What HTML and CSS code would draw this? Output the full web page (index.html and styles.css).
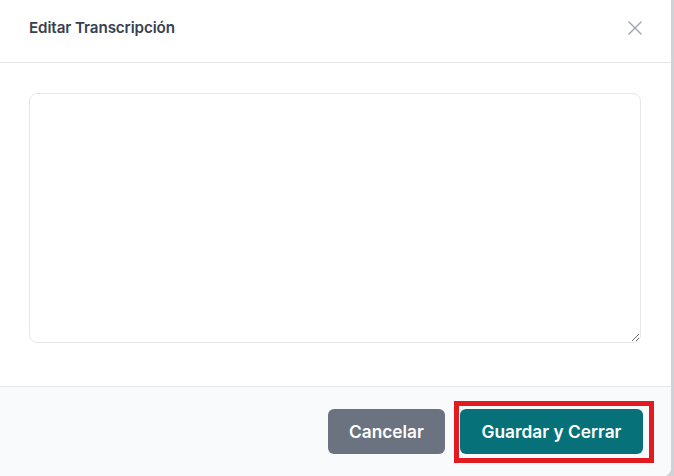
FILE: index.html
```html
<!DOCTYPE html>
<html lang="es">
<head>
<meta charset="utf-8">
<title>Editar Transcripción</title>
<link rel="stylesheet" href="styles.css">
</head>
<body>
<div class="modal">
  <div class="modal-header">
    <h2 class="modal-title">Editar Transcripción</h2>
    <button class="close-btn" aria-label="Cerrar">
      <svg width="14" height="14" viewBox="0 0 14 14" fill="none" stroke="#9ca3af" stroke-width="1.4" stroke-linecap="round"><path d="M1 1L13 13M13 1L1 13"/></svg>
    </button>
  </div>
  <div class="modal-body">
    <textarea class="transcript"></textarea>
  </div>
  <div class="modal-footer">
    <button class="btn btn-cancel">Cancelar</button>
    <button class="btn btn-save">Guardar y Cerrar</button>
  </div>
</div>
<div class="highlight"></div>
</body>
</html>
```
FILE: styles.css
```css
html, body {
  margin: 0;
  padding: 0;
  height: 100%;
}
body {
  background: #cfd2d6;
  overflow: hidden;
  position: relative;
}
.modal {
  width: 671px;
  height: 476px;
  background: #ffffff;
  border-bottom-right-radius: 8px;
  display: flex;
  flex-direction: column;
  overflow: hidden;
}
.modal-header {
  border-bottom: 1px solid #e5e7eb;
  display: flex;
  align-items: center;
  justify-content: space-between;
  padding: 0 29px 0 29px;
  box-sizing: border-box;
  flex: none;
  height: 63px;
}
.modal-title {
  margin: 0;
  font-family: Inter, "Liberation Sans", sans-serif;
  font-weight: 600;
  font-size: 15.2px;
  color: #374151;
  letter-spacing: -0.1px;
  padding-bottom: 7px;
}
.close-btn {
  background: none;
  border: none;
  padding: 0;
  width: 14px;
  height: 14px;
  display: flex;
  margin-bottom: 7px;
}
.modal-body {
  flex: none;
  height: 323px;
  padding: 30px 30px 0 29px;
  box-sizing: border-box;
}
.transcript {
  display: block;
  width: 612px;
  height: 250px;
  box-sizing: border-box;
  border: 1px solid #e5e7eb;
  border-radius: 8px;
  resize: vertical;
  outline: none;
  font-family: Inter, sans-serif;
}
.modal-footer {
  flex: 1;
  background: #f9fafb;
  border-top: 1px solid #e5e7eb;
  display: flex;
  justify-content: flex-end;
  align-items: flex-start;
  gap: 15px;
  padding: 22px 28px 0 0;
}
.btn {
  height: 45px;
  border: none;
  border-radius: 6px;
  color: #ffffff;
  font-family: Inter, "Liberation Sans", sans-serif;
  font-weight: 600;
  font-size: 17.3px;
  padding: 0 10px;
  box-sizing: border-box;
}
.btn-cancel {
  background: #6b7280;
  width: 117px;
}
.btn-save {
  background: #07717a;
  width: 183px;
}
.highlight {
  position: absolute;
  left: 454px;
  top: 401px;
  width: 200px;
  height: 62px;
  box-sizing: border-box;
  border: 5px solid #e11b1f;
}
```
